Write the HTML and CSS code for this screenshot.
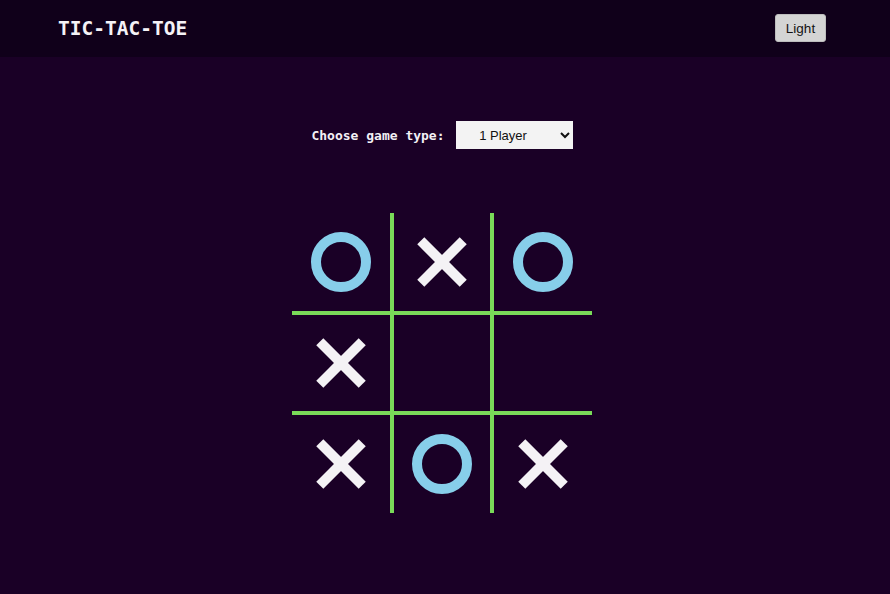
FILE: index.html
```html
<!DOCTYPE html>
<html lang="en">
<head>
<meta charset="utf-8">
<title>Tic-Tac-Toe</title>
<link rel="stylesheet" href="styles.css">
</head>
<body>
<header class="topbar">
  <h1 class="title">TIC-TAC-TOE</h1>
  <button class="theme-btn" type="button">Light</button>
</header>
<main class="main">
  <div class="controls">
    <label class="controls-label" for="mode">Choose game type:</label>
    <select id="mode" class="mode-select">
      <option>1 Player</option>
      <option>2 Players</option>
    </select>
  </div>
  <div class="board">
    <div class="cell c-r1 c-c1"><span class="o"></span></div>
    <div class="cell c-r1 c-c2"><span class="x"></span></div>
    <div class="cell c-r1 c-c3"><span class="o"></span></div>
    <div class="cell c-r2 c-c1"><span class="x"></span></div>
    <div class="cell c-r2 c-c2"></div>
    <div class="cell c-r2 c-c3"></div>
    <div class="cell c-r3 c-c1"><span class="x"></span></div>
    <div class="cell c-r3 c-c2"><span class="o"></span></div>
    <div class="cell c-r3 c-c3"><span class="x"></span></div>
  </div>
</main>
</body>
</html>
```
FILE: styles.css
```css
* { box-sizing: border-box; }
html, body {
  margin: 0;
  padding: 0;
  height: 100%;
}
body {
  background: #1a0026;
  font-family: "DejaVu Sans Mono", monospace;
  color: #f3f0f5;
}
.topbar {
  height: 57px;
  background: #10001a;
  display: flex;
  align-items: center;
  justify-content: space-between;
  padding: 0 64px 1px 58px;
}
.title {
  margin: 0;
  font-size: 19.5px;
  font-weight: bold;
  color: #f5f2f7;
  letter-spacing: 0;
}
.theme-btn {
  font-family: "Liberation Sans", Arial, sans-serif;
  font-size: 13.5px;
  color: #111;
  background: #d4d4d4;
  border: 1px solid #bdbdbd;
  border-radius: 3px;
  height: 28px;
  width: 51px;
  padding: 0;
}
.main {
  display: flex;
  flex-direction: column;
  align-items: center;
  padding: 64px 6px 0 0;
}
.controls {
  display: flex;
  align-items: center;
  gap: 11px;
  height: 28px;
}
.controls-label {
  font-size: 13px;
  font-weight: bold;
  color: #f3f0f5;
}
.mode-select {
  width: 117px;
  height: 28px;
  padding: 0 10px 0 0;
  background: #f3f3f3;
  border: none;
  border-radius: 0;
  font-family: "Liberation Sans", Arial, sans-serif;
  font-size: 13px;
  color: #111;
  text-align: center;
  text-align-last: center;
}
.board {
  margin-top: 64px;
  display: grid;
  grid-template-columns: repeat(3, 100px);
  grid-template-rows: repeat(3, 100px);
}
.cell {
  display: flex;
  align-items: center;
  justify-content: center;
  border: 0 solid #79da58;
}
.c-c1 { border-right-width: 2px; }
.c-c2 { border-left-width: 2px; border-right-width: 2px; }
.c-c3 { border-left-width: 2px; }
.c-r1 { border-bottom-width: 2px; }
.c-r2 { border-top-width: 2px; border-bottom-width: 2px; }
.c-r3 { border-top-width: 2px; }
.o {
  width: 60px;
  height: 60px;
  border: 10px solid #87ceea;
  border-radius: 50%;
}
.x {
  position: relative;
  width: 50px;
  height: 50px;
}
.x::before,
.x::after {
  content: "";
  position: absolute;
  left: -5px;
  top: 20px;
  width: 60px;
  height: 10px;
  background: #f4f2f5;
  transform: rotate(45deg);
}
.x::after {
  transform: rotate(-45deg);
}
```
